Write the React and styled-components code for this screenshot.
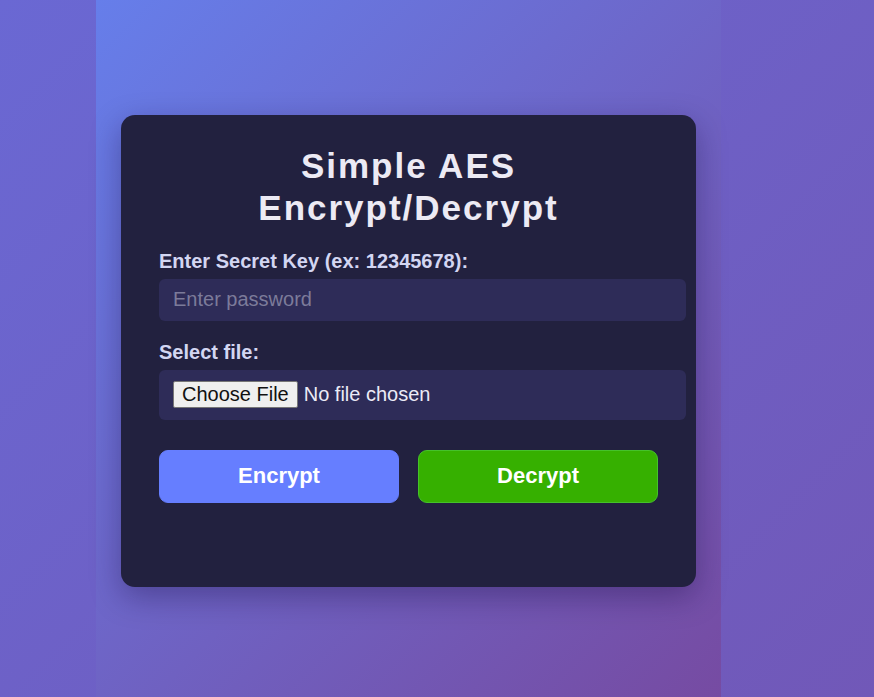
import styled, { createGlobalStyle } from "styled-components";

const GlobalStyle = createGlobalStyle`
  html {
    min-height: 100%;
    background: linear-gradient(135deg, #6a68d3 0%, #7158b8 100%);
  }

  body {
    margin: 0;
    font-family: "Liberation Sans", Arial, sans-serif;
  }
`;

const Page = styled.main`
  width: 625px;
  min-height: 100vh;
  margin-left: 96px;
  padding-top: 4px;
  display: flex;
  align-items: center;
  justify-content: center;
  box-sizing: border-box;
  background: linear-gradient(135deg, #667eea 0%, #764ba2 100%);
`;

const Card = styled.section`
  width: 575px;
  box-sizing: border-box;
  padding: 30px 38px 25px;
  background-color: #22213f;
  border-radius: 14px;
  box-shadow: 0 10px 30px rgba(20, 10, 60, 0.35);
`;

const Title = styled.h1`
  margin: 0 0 21px;
  font-size: 35px;
  line-height: 42px;
  letter-spacing: 2px;
  text-align: center;
  color: #eceaf4;
`;

const Field = styled.div`
  margin-bottom: ${(p) => p.$gap || "20px"};
`;

const Label = styled.label`
  display: block;
  margin-bottom: 6px;
  font-size: 20px;
  line-height: 23px;
  font-weight: bold;
  color: #d3d6f2;
`;

const Input = styled.input`
  display: block;
  width: 100%;
  height: 42px;
  padding: 0 14px;
  font-family: inherit;
  font-size: 20px;
  color: #e6e6f2;
  background-color: #2e2c58;
  border: none;
  border-radius: 6px;
  outline: none;

  &::placeholder {
    color: #7c7b9a;
  }
`;

const FileInput = styled.input`
  display: block;
  width: 100%;
  padding: 11px 14px 12px;
  font-family: inherit;
  font-size: 20px;
  color: #ecebf6;
  background-color: #2e2c58;
  border: none;
  border-radius: 6px;

  &::file-selector-button {
    font-family: inherit;
    font-size: 20px;
    padding: 1px 8px;
    margin-right: 6px;
    color: #111;
    background-color: #efefef;
    border: 1px solid #767676;
    border-radius: 2px;
  }
`;

const Buttons = styled.div`
  display: flex;
  gap: 19px;
  margin-bottom: 59px;
`;

const ActionButton = styled.button`
  flex: 1;
  height: 53px;
  font-family: inherit;
  font-size: 22px;
  font-weight: bold;
  color: #ffffff;
  background-color: ${(p) => (p.$green ? "#36b000" : "#667eff")};
  border: 1px solid ${(p) => (p.$green ? "#45c22a" : "#667eff")};
  border-radius: 9px;
  cursor: pointer;
`;

export default function App() {
  return (
    <>
      <GlobalStyle />
      <Page>
        <Card>
          <Title>
            Simple AES
            <br />
            Encrypt/Decrypt
          </Title>
          <Field>
            <Label htmlFor="key">Enter Secret Key (ex: 12345678):</Label>
            <Input id="key" type="password" placeholder="Enter password" />
          </Field>
          <Field $gap="30px">
            <Label htmlFor="file">Select file:</Label>
            <FileInput id="file" type="file" />
          </Field>
          <Buttons>
            <ActionButton>Encrypt</ActionButton>
            <ActionButton $green>Decrypt</ActionButton>
          </Buttons>
        </Card>
      </Page>
    </>
  );
}
